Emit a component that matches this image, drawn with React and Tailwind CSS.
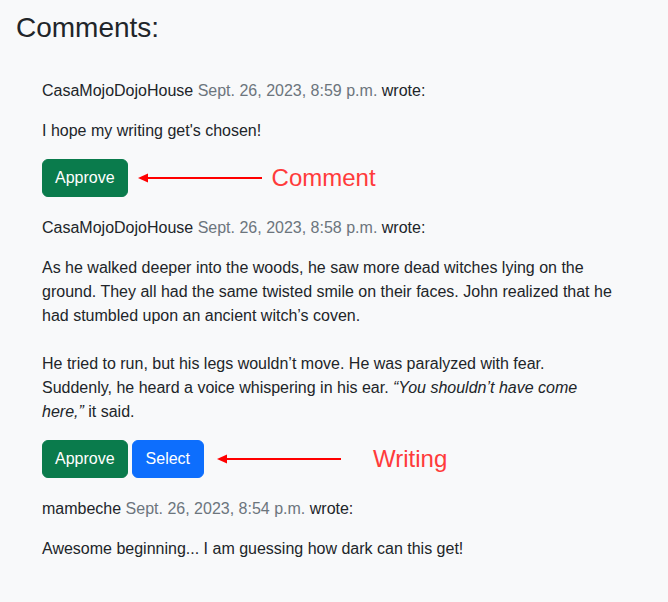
import React from 'react';

function Arrow({ width }) {
  return (
    <svg width={width} height="12" viewBox={`0 0 ${width} 12`} className="block">
      <line x1="8" y1="6" x2={width} y2="6" stroke="#ff0000" strokeWidth="2" />
      <polygon points="0,6 10,1.5 10,10.5" fill="#ff0000" />
    </svg>
  );
}

function Meta({ author, date }) {
  return (
    <p className="leading-6 mb-4">
      {author} <span className="text-[#6c757d]">{date}</span> wrote:
    </p>
  );
}

function Btn({ color, children }) {
  return (
    <button className={`h-[38px] px-3 rounded-md border text-white text-base leading-6 ${color}`}>
      {children}
    </button>
  );
}

export default function App() {
  return (
    <div
      className="min-h-[602px] bg-[#f8f9fa] text-[#212529] text-base"
      style={{ fontFamily: '"Liberation Sans", Arial, sans-serif' }}
    >
      <div className="pl-4 pt-[11px]">
        <h3 className="text-[28px] leading-[1.2] font-medium">Comments:</h3>

        <div className="pl-[26px] pt-[34px]">
          {/* comment 1 */}
          <Meta author="CasaMojoDojoHouse" date="Sept. 26, 2023, 8:59 p.m." />
          <p className="leading-6 mb-4">I hope my writing get's chosen!</p>
          <div className="flex items-center mb-[19px]">
            <Btn color="bg-[#0a7b4c] border-[#0a7b4c]">Approve</Btn>
            <div className="ml-[10px]">
              <Arrow width={124} />
            </div>
            <span className="ml-[10px] text-[24px] leading-none text-[#ff3b3b]">Comment</span>
          </div>

          {/* comment 2 */}
          <Meta author="CasaMojoDojoHouse" date="Sept. 26, 2023, 8:58 p.m." />
          <p className="leading-6 mb-4 whitespace-nowrap">
            As he walked deeper into the woods, he saw more dead witches lying on the
            <br />
            ground. They all had the same twisted smile on their faces. John realized that he
            <br />
            had stumbled upon an ancient witch’s coven.
            <br />
            <br />
            He tried to run, but his legs wouldn’t move. He was paralyzed with fear.
            <br />
            Suddenly, he heard a voice whispering in his ear. <em>“You shouldn’t have come</em>
            <br />
            <em>here,”</em> it said.
          </p>
          <div className="flex items-center mb-[19px]">
            <Btn color="bg-[#0a7b4c] border-[#0a7b4c]">Approve</Btn>
            <div className="ml-1">
              <Btn color="bg-[#0d6efd] border-[#0d6efd] px-[13px]">Select</Btn>
            </div>
            <div className="ml-[13px]">
              <Arrow width={124} />
            </div>
            <span className="ml-[32px] text-[24px] leading-none text-[#ff3b3b]">Writing</span>
          </div>

          {/* comment 3 */}
          <Meta author="mambeche" date="Sept. 26, 2023, 8:54 p.m." />
          <p className="leading-6 mb-4">Awesome beginning... I am guessing how dark can this get!</p>
        </div>
      </div>
    </div>
  );
}
